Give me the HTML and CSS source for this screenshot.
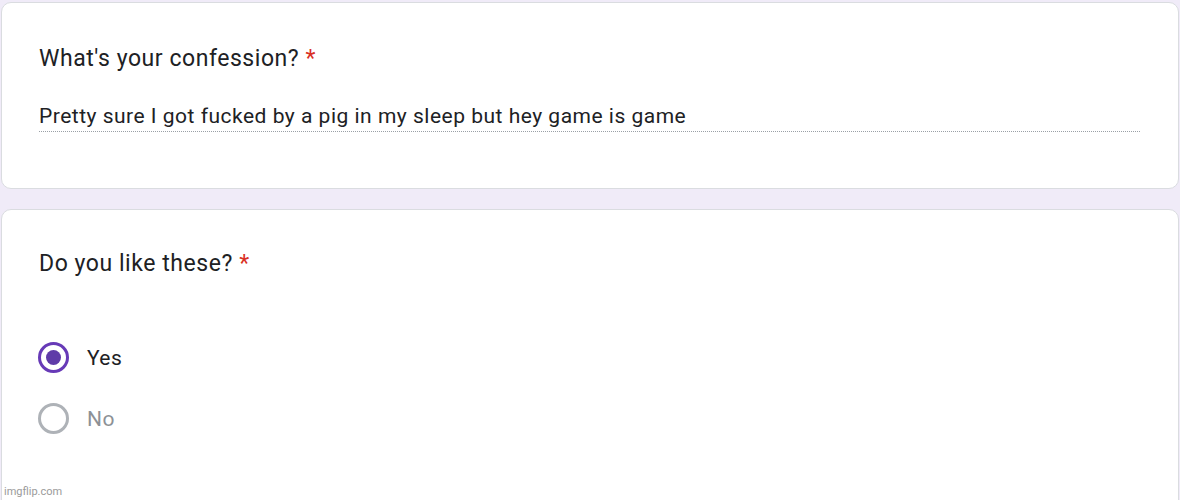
FILE: index.html
```html
<!DOCTYPE html>
<html lang="en">
<head>
    <meta charset="UTF-8">
    <title>Confessions</title>
    <link rel="stylesheet" href="styles.css">
</head>
<body>
    <div class="form-wrap">
        <div class="card card-text">
            <div class="question">What's your confession? <span class="req">*</span></div>
            <div class="answer">Pretty sure I got fucked by a pig in my sleep but hey game is game</div>
        </div>

        <div class="card card-choice">
            <div class="question">Do you like these? <span class="req">*</span></div>
            <div class="options">
                <div class="option checked">
                    <span class="radio"><span class="dot"></span></span>
                    <span class="label">Yes</span>
                </div>
                <div class="option">
                    <span class="radio"></span>
                    <span class="label">No</span>
                </div>
            </div>
        </div>
    </div>

    <div class="watermark">imgflip.com</div>
</body>
</html>
```

FILE: styles.css
```css
* {
    margin: 0;
    padding: 0;
    box-sizing: border-box;
}

body {
    font-family: Roboto, 'Liberation Sans', Arial, sans-serif;
    background: #f0ebf8;
    height: 500px;
    overflow: hidden;
    position: relative;
}

.form-wrap {
    display: flex;
    flex-direction: column;
    gap: 20px;
    padding: 2px 1px 0 1px;
}

.card {
    background: #fff;
    border: 1px solid #dadce0;
    border-radius: 10px;
    padding: 0 37px 0 37px;
}

.card-text {
    height: 187px;
    padding-top: 41px;
}

.card-choice {
    height: 320px;
    padding-top: 39px;
}

.question {
    font-size: 23px;
    line-height: 30px;
    color: #202124;
    letter-spacing: 0.55px;
}

.req {
    color: #d93025;
}

.answer {
    margin-top: 29px;
    font-size: 21px;
    line-height: 26px;
    letter-spacing: 0.5px;
    color: #202124;
    border-bottom: 1px dotted #9aa0a6;
    padding-bottom: 2px;
    margin-right: 1px;
}

.options {
    display: flex;
    flex-direction: column;
    gap: 30px;
    margin-top: 63px;
}

.option {
    display: flex;
    align-items: center;
    gap: 18px;
    height: 31px;
}

.radio {
    width: 31px;
    height: 31px;
    margin-left: -1px;
    border-radius: 50%;
    border: 3px solid #aeb2b7;
    display: flex;
    align-items: center;
    justify-content: center;
}

.option.checked .radio {
    border-color: #673ab7;
}

.dot {
    width: 15px;
    height: 15px;
    border-radius: 50%;
    background: #5f3ba8;
}

.label {
    font-size: 21px;
    letter-spacing: 0.4px;
    color: #8d9196;
}

.option.checked .label {
    color: #202124;
}

.watermark {
    position: absolute;
    left: 4px;
    bottom: 2px;
    font-size: 11px;
    color: #9a9a9a;
}
```
